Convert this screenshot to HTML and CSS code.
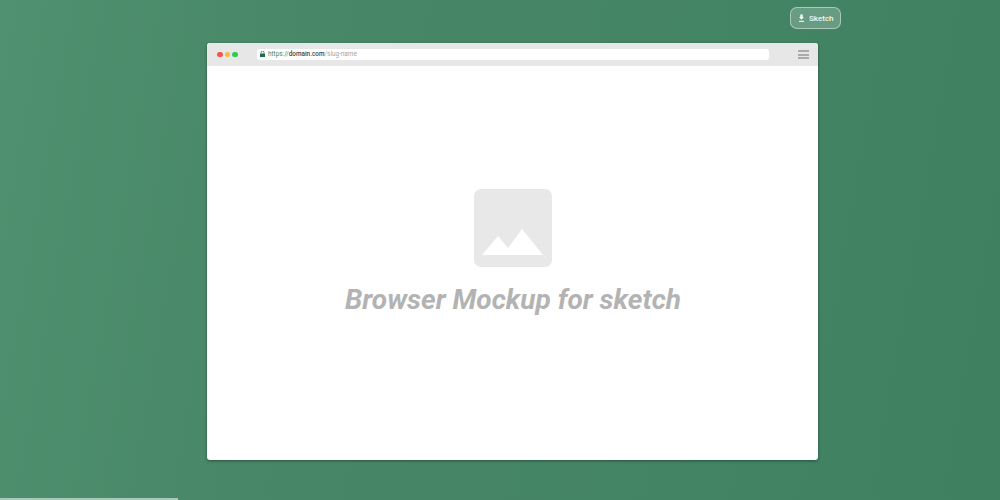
FILE: index.html
```html
<!DOCTYPE html>
<html lang="en">
<head>
<meta charset="utf-8">
<title>Browser Mockup for sketch</title>
<link rel="stylesheet" href="styles.css">
</head>
<body>
<div class="page">
  <header class="topbar">
    <a class="sketch-btn">
      <svg class="dl-icon" width="7" height="8" viewBox="0 0 7 8"><path d="M2.300 0.600h2.400v2.300h1.200L3.500 5.700 1.100 2.900h1.200z" fill="#fff"/><rect x="1" y="6.800" width="5" height="1" fill="#fff"/></svg>
      <span>Sketch</span>
    </a>
  </header>
  <main class="browser">
    <div class="toolbar">
      <div class="dots">
        <span class="dot red"></span>
        <span class="dot yellow"></span>
        <span class="dot green"></span>
      </div>
      <div class="address">
        <svg class="lock" width="5" height="6" viewBox="0 0 5 6"><path d="M1 2.500V1.600a1.500 1.500 0 0 1 3 0v.9" fill="none" stroke="#1f6b4a" stroke-width=".8"/><rect y="2.400" width="5" height="3.600" rx=".5" fill="#1f6b4a"/></svg>
        <span class="url"><span class="scheme">https://</span><span class="domain">domain.com</span><span class="slug">/slug-name</span></span>
      </div>
      <div class="menu"><i></i><i></i><i></i></div>
    </div>
    <div class="content">
      <div class="placeholder">
        <svg width="61" height="26" viewBox="0 0 61 26"><path d="M0 26 L16 7 L26 19 L40 0 L61 26 Z" fill="#fff"/></svg>
      </div>
      <h1 class="title">Browser Mockup for sketch</h1>
    </div>
  </main>
  <div class="progress"></div>
</div>
</body>
</html>
```
FILE: styles.css
```css
* { box-sizing: border-box; }
html, body { margin: 0; padding: 0; }
body { width: 1000px; height: 500px; overflow: hidden; font-family: Roboto, "Liberation Sans", sans-serif; }
.page {
  position: relative;
  width: 1000px;
  height: 500px;
  padding-top: 7px;
  background: linear-gradient(100deg, #4f9170 0%, #488767 30%, #438464 70%, #3f8060 100%);
}
.topbar { display: flex; justify-content: flex-end; height: 22px; padding-right: 159px; }
.sketch-btn {
  display: flex;
  align-items: center;
  gap: 4px;
  width: 51px;
  height: 22px;
  padding-left: 7px;
  border: 1px solid rgba(255,255,255,.45);
  border-radius: 7px;
  background: rgba(255,255,255,.2);
  color: #f4f8f6;
  font-size: 8px;
  font-weight: 500;
}
.dl-icon { flex: none; }
.browser {
  width: 611px;
  height: 417px;
  margin: 14px 0 0 207px;
  display: flex;
  flex-direction: column;
  background: #fff;
  border-radius: 3px;
  overflow: hidden;
  box-shadow: 0 1px 3px rgba(20,50,35,.6);
}
.toolbar {
  display: flex;
  align-items: center;
  height: 23px;
  flex: none;
  padding: 0 9px 0 10px;
  background: #e7e7e7;
}
.dots { display: flex; gap: 2px; width: 40px; flex: none; }
.dot { width: 5.500px; height: 5.500px; border-radius: 50%; }
.red { background: #f4524d; }
.yellow { background: #f7bb3e; }
.green { background: #2ecb4f; }
.address {
  display: flex;
  align-items: center;
  gap: 3px;
  width: 512px;
  height: 11px;
  margin-right: 29px;
  flex: none;
  padding-left: 3px;
  background: #fff;
  border-radius: 3px;
}
.lock { flex: none; margin-top: -1px; }
.url { font-size: 6.400px; line-height: 11px; white-space: nowrap; }
.scheme { color: #3b8a66; }
.domain { color: #444; font-weight: 500; }
.slug { color: #a3a3a3; }
.menu { display: flex; flex-direction: column; gap: 1.500px; width: 11px; flex: none; }
.menu i { display: block; height: 2px; background: #ababab; }
.content {
  flex: 1;
  display: flex;
  flex-direction: column;
  align-items: center;
  padding-top: 123px;
}
.placeholder {
  width: 78px;
  height: 78px;
  display: flex;
  align-items: flex-end;
  justify-content: center;
  padding-bottom: 12px;
  background: #e8e8e8;
  border-radius: 7px;
}
.title {
  margin: 16px 0 0 1px;
  font-size: 28px;
  line-height: 34px;
  font-weight: 700;
  font-style: italic;
  color: #b3b3b3;
  white-space: nowrap;
}
.progress { position: absolute; left: 0; bottom: 0; width: 178px; height: 2px; background: #a9c8b7; }
```
